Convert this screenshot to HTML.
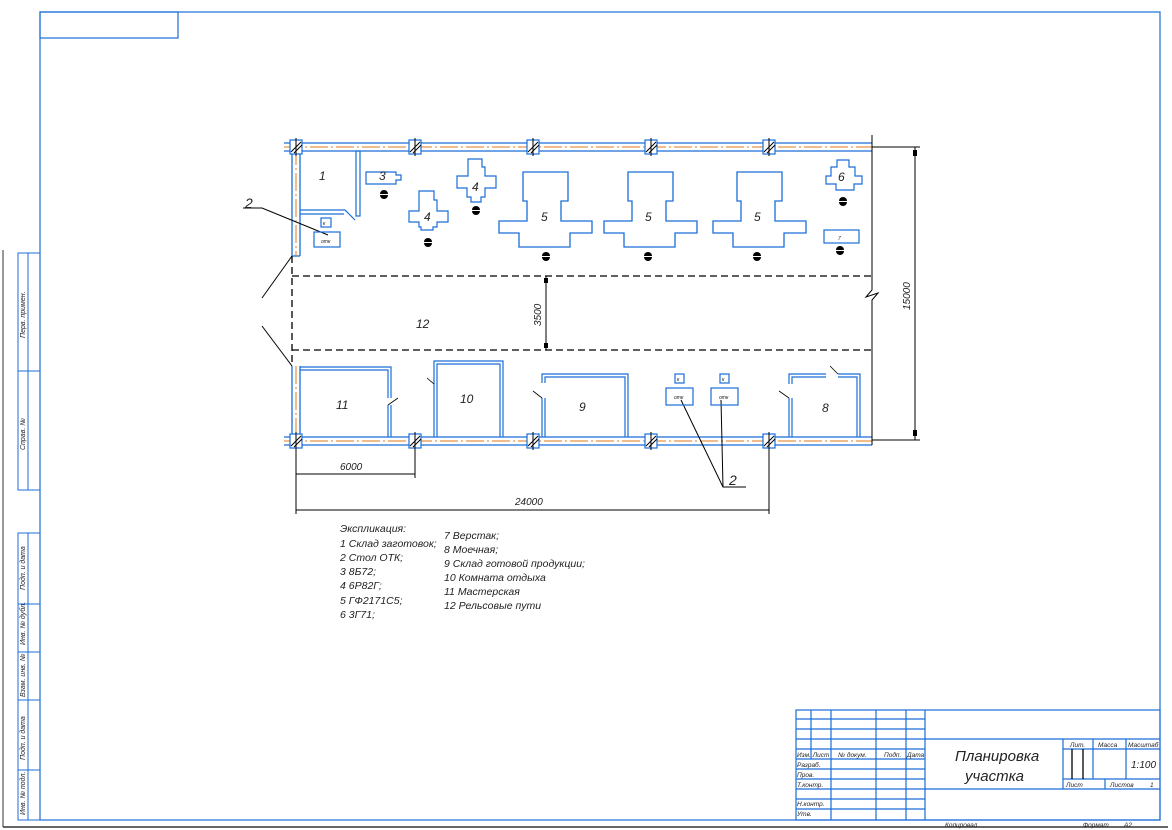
<!DOCTYPE html>
<html><head><meta charset="utf-8"><style>
html,body{margin:0;padding:0;background:#fff;}
svg{display:block;}
text{font-family:"Liberation Sans","DejaVu Sans",sans-serif;font-style:italic;fill:#222;}
</style></head><body>
<svg width="1172" height="830" viewBox="0 0 1172 830" xmlns="http://www.w3.org/2000/svg">
<defs>
<g id="col"><rect x="-6" y="-7" width="12" height="14" fill="#fff" stroke="#1a6ed8" stroke-width="1.2"/><line x1="-5" y1="5" x2="5" y2="-5" stroke="#000" stroke-width="1"/><line x1="-2" y1="6" x2="6" y2="-2" stroke="#000" stroke-width="1"/><line x1="0" y1="-9" x2="0" y2="9" stroke="#000" stroke-width="1"/></g>
<path id="five" d="M0,0 H45 V29 H38 V49 H69 V61 H47 V75 H-4 V61 H-24 V49 H4 V29 H0 Z" fill="none" stroke="#1a6ed8" stroke-width="1.3"/>
<g id="dot"><path d="M-4,0 A4,4 0 0 1 4,0 Z" fill="#000"/><path d="M-4,1 A4,4 0 0 0 4,1 Z" fill="#000"/></g>
</defs>
<!-- page frame -->
<line x1="3" y1="250" x2="3" y2="827" stroke="#333" stroke-width="1"/>
<line x1="3" y1="827" x2="1168" y2="827" stroke="#333" stroke-width="1.5"/>
<rect x="40" y="12" width="1120" height="808" fill="none" stroke="#1a6ed8" stroke-width="1.2"/>
<rect x="40" y="12" width="138" height="26" fill="none" stroke="#1a6ed8" stroke-width="1.2"/>
<!-- left strip -->
<g stroke="#1a6ed8" stroke-width="1" fill="none">
<rect x="18" y="253" width="22" height="237"/><line x1="28" y1="253" x2="28" y2="490"/><line x1="18" y1="371" x2="40" y2="371"/>
<rect x="18" y="533" width="22" height="287"/><line x1="28" y1="533" x2="28" y2="820"/>
<line x1="18" y1="604" x2="40" y2="604"/><line x1="18" y1="652" x2="40" y2="652"/><line x1="18" y1="700" x2="40" y2="700"/><line x1="18" y1="770" x2="40" y2="770"/>
</g>
<g font-size="7">
<text transform="translate(25,338) rotate(-90)">Перв. примен.</text>
<text transform="translate(25,450) rotate(-90)">Справ. №</text>
<text transform="translate(25,590) rotate(-90)">Подп. и дата</text>
<text transform="translate(25,645) rotate(-90)">Инв. № дубл.</text>
<text transform="translate(25,697) rotate(-90)">Взам. инв. №</text>
<text transform="translate(25,760) rotate(-90)">Подп. и дата</text>
<text transform="translate(25,815) rotate(-90)">Инв. № подл.</text>
</g>
<!-- walls -->
<g stroke="#1a6ed8" stroke-width="1.3" fill="none">
<line x1="284" y1="143" x2="872" y2="143"/><line x1="284" y1="151" x2="872" y2="151"/>
<line x1="284" y1="437" x2="872" y2="437"/><line x1="284" y1="445" x2="872" y2="445"/>
<line x1="292" y1="143" x2="292" y2="256"/><line x1="300" y1="151" x2="300" y2="256"/><line x1="292" y1="256" x2="300" y2="256"/>
<line x1="292" y1="366" x2="292" y2="441"/><line x1="300" y1="366" x2="300" y2="437"/>
</g>
<g stroke="#e07a1a" stroke-width="1" stroke-dasharray="18,3,2,3">
<line x1="284" y1="147" x2="872" y2="147"/><line x1="284" y1="441" x2="872" y2="441"/><line x1="296" y1="147" x2="296" y2="256"/><line x1="296" y1="366" x2="296" y2="441"/>
</g>
<use href="#col" x="296" y="147"/><use href="#col" x="415" y="147"/><use href="#col" x="533" y="147"/><use href="#col" x="651" y="147"/><use href="#col" x="769" y="147"/>
<use href="#col" x="296" y="441"/><use href="#col" x="415" y="441"/><use href="#col" x="533" y="441"/><use href="#col" x="651" y="441"/><use href="#col" x="769" y="441"/>
<!-- right edge and dims -->
<g stroke="#000" stroke-width="1" fill="none">
<polyline points="872,135 872,290 866,297 878,293 872,300 872,445"/>
<line x1="872" y1="147" x2="920" y2="147"/><line x1="872" y1="440" x2="920" y2="440"/><line x1="915" y1="147" x2="915" y2="440"/>
<line x1="546" y1="276" x2="546" y2="350"/>
<line x1="296" y1="450" x2="296" y2="514"/><line x1="415" y1="450" x2="415" y2="478"/><line x1="769" y1="450" x2="769" y2="514"/>
<line x1="296" y1="474" x2="415" y2="474"/><line x1="296" y1="510" x2="769" y2="510"/>
<line x1="262" y1="298" x2="292" y2="256"/><line x1="262" y1="326" x2="292" y2="366"/>
<polyline points="243,208 262,208 328,235"/>
<polyline points="746,487 723,487 681,400"/><line x1="723" y1="487" x2="721" y2="400"/>
</g>
<g fill="#000"><rect x="913" y="150" width="4" height="6"/><rect x="913" y="430" width="4" height="6"/><rect x="544" y="278" width="4" height="5"/><rect x="544" y="343" width="4" height="5"/></g>
<g stroke="#000" stroke-width="1.3" stroke-dasharray="7,4" fill="none">
<line x1="292" y1="276" x2="872" y2="276"/><line x1="292" y1="350" x2="872" y2="350"/><line x1="292" y1="256" x2="292" y2="366"/>
</g>
<!-- inner walls -->
<g stroke="#1a6ed8" stroke-width="1.2" fill="none">
<rect x="356" y="151" width="4" height="65"/>
<polyline points="300,210 345,210 355,220"/><line x1="300" y1="214" x2="344" y2="214"/>
<path d="M300,367 H391 V398 M300,370 H388 V398 M388,405 V437 M391,405 V437"/>
<path d="M434,437 V384 M437,437 V384 M434,384 V361 H503 V437 M437,384 V364 H500 V437"/>
<path d="M542,437 V398 M545,437 V398 M542,383 V374 H628 V437 M545,383 V377 H625 V437"/>
<path d="M789,437 V398 M792,437 V398 M789,384 V374 H826 M792,384 V377 H826 M838,374 H860 V437 M838,377 H857 V437"/>
<path d="M366,172 H396 V175 H401 V180 H396 V184 H366 Z"/>
<path d="M419,191 H434 V200 H437 V211 H448 V222 H437 V227 H433 V230 H421 V227 H419 V222 H409 V211 H419 Z"/>
<path d="M468,159 H482 V167 H485 V176 H496 V188 H485 V197 H481 V202 H471 V197 H467 V188 H457 V176 H468 Z"/>
<path d="M837,160 H849 V167 H855 V176 H862 V184 H854 V190 H836 V184 H826 V176 H831 V167 H837 Z"/>
<rect x="824" y="230" width="35" height="13"/>
<rect x="321" y="218" width="10" height="9"/><rect x="314" y="232" width="26" height="15"/>
<rect x="675" y="374" width="9" height="9"/><rect x="666" y="388" width="27" height="17"/>
<rect x="720" y="374" width="9" height="9"/><rect x="711" y="388" width="27" height="17"/>
</g>
<g stroke="#000" stroke-width="0.8"><line x1="388" y1="405" x2="398" y2="398"/><line x1="427" y1="378" x2="434" y2="384"/><line x1="533" y1="391" x2="542" y2="398"/><line x1="779" y1="391" x2="789" y2="398"/><line x1="830" y1="366" x2="838" y2="374"/></g>
<use href="#five" x="523" y="172"/><use href="#five" x="628" y="172"/><use href="#five" x="737" y="172"/>
<use href="#dot" x="384" y="194"/><use href="#dot" x="428" y="242"/><use href="#dot" x="476" y="210"/><use href="#dot" x="546" y="256"/><use href="#dot" x="648" y="256"/><use href="#dot" x="757" y="256"/><use href="#dot" x="843" y="201"/><use href="#dot" x="840" y="250"/>
<!-- labels -->
<g font-size="12">
<text x="319" y="180">1</text><text x="379" y="180">3</text><text x="424" y="221">4</text><text x="472" y="191">4</text>
<text x="541" y="221">5</text><text x="645" y="221">5</text><text x="754" y="221">5</text><text x="838" y="181">6</text>
<text x="416" y="328">12</text><text x="336" y="409">11</text><text x="460" y="403">10</text><text x="579" y="411">9</text><text x="822" y="412">8</text>
<text x="245" y="208" font-size="14">2</text><text x="729" y="485" font-size="14">2</text>
</g>
<g font-size="5"><text x="838" y="240">7</text><text x="323" y="225">к</text><text x="321" y="243">отк</text><text x="677" y="381">к</text><text x="674" y="399">отк</text><text x="722" y="381">к</text><text x="719" y="399">отк</text></g>
<g font-size="10">
<text x="340" y="470">6000</text><text x="515" y="505">24000</text>
<text transform="translate(541,326) rotate(-90)">3500</text>
<text transform="translate(910,310) rotate(-90)">15000</text>
</g>
<!-- explication -->
<g font-size="10.5">
<text x="340" y="532">Экспликация:</text>
<text x="340" y="547">1 Склад заготовок;</text>
<text x="340" y="561">2 Стол ОТК;</text>
<text x="340" y="575">3 8Б72;</text>
<text x="340" y="589">4 6Р82Г;</text>
<text x="340" y="604">5 ГФ2171С5;</text>
<text x="340" y="618">6 3Г71;</text>
<text x="444" y="539">7 Верстак;</text>
<text x="444" y="553">8 Моечная;</text>
<text x="444" y="567">9 Склад готовой продукции;</text>
<text x="444" y="581">10 Комната отдыха</text>
<text x="444" y="595">11 Мастерская</text>
<text x="444" y="609">12 Рельсовые пути</text>
</g>
<!-- title block -->
<g stroke="#1a6ed8" stroke-width="1.2" fill="none">
<rect x="796" y="710" width="364" height="110"/>
<line x1="925" y1="710" x2="925" y2="820"/>
<line x1="811" y1="710" x2="811" y2="759"/><line x1="831" y1="710" x2="831" y2="820"/><line x1="876" y1="710" x2="876" y2="820"/><line x1="906" y1="710" x2="906" y2="820"/>
<line x1="796" y1="719" x2="925" y2="719"/><line x1="796" y1="729" x2="925" y2="729"/><line x1="796" y1="739" x2="1160" y2="739"/><line x1="796" y1="749" x2="925" y2="749"/><line x1="796" y1="759" x2="925" y2="759"/><line x1="796" y1="769" x2="925" y2="769"/><line x1="796" y1="779" x2="925" y2="779"/><line x1="796" y1="789" x2="1160" y2="789"/><line x1="796" y1="799" x2="925" y2="799"/><line x1="796" y1="809" x2="925" y2="809"/>
<line x1="1063" y1="739" x2="1063" y2="789"/><line x1="1093" y1="739" x2="1093" y2="779"/><line x1="1126" y1="739" x2="1126" y2="779"/>
<line x1="1063" y1="749" x2="1160" y2="749"/><line x1="1063" y1="779" x2="1160" y2="779"/><line x1="1105" y1="779" x2="1105" y2="789"/>
</g>
<g stroke="#000" stroke-width="1.3"><line x1="1072" y1="749" x2="1072" y2="779"/><line x1="1083" y1="749" x2="1083" y2="779"/></g>
<g font-size="6.5">
<text x="797" y="757">Изм. Лист</text><text x="838" y="757">№ докум.</text><text x="884" y="757">Подп.</text><text x="907" y="757">Дата</text>
<text x="797" y="767">Разраб.</text><text x="797" y="777">Пров.</text><text x="797" y="787">Т.контр.</text><text x="797" y="806">Н.контр.</text><text x="797" y="816">Утв.</text>
<text x="1070" y="747">Лит.</text><text x="1098" y="747">Масса</text><text x="1128" y="747">Масштаб</text>
<text x="1066" y="787">Лист</text><text x="1110" y="787">Листов</text><text x="1150" y="787">1</text>
<text x="945" y="827">Копировал</text><text x="1083" y="827">Формат</text><text x="1124" y="827">А2</text>
</g>
<text x="1131" y="768" font-size="10">1:100</text>
<text x="955" y="761" font-size="15">Планировка</text>
<text x="965" y="781" font-size="15">участка</text>
</svg>
</body></html>
